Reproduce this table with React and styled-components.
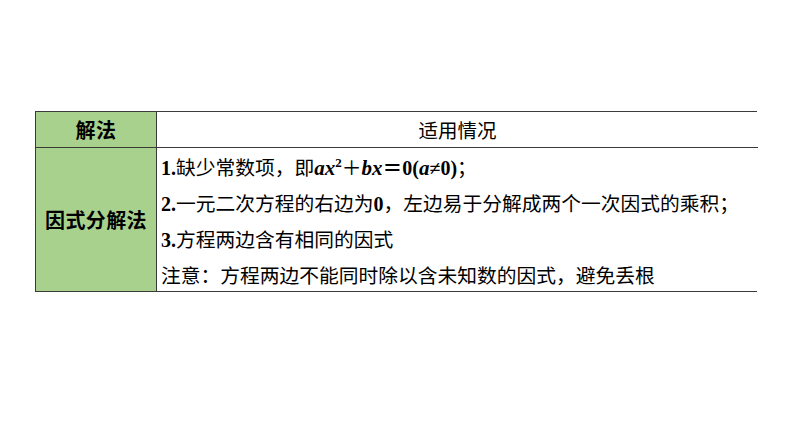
import React from "react";
import styled, { createGlobalStyle } from "styled-components";

const Global = createGlobalStyle`
  html, body { margin: 0; padding: 0; background: #fff; }
  body { font-family: "Noto Sans CJK SC", "Noto Sans", sans-serif; color: #000; }
`;

const Page = styled.div`
  width: 794px;
  height: 447px;
  box-sizing: border-box;
  padding: 111px 0 0 35px;
`;

const Table = styled.div`
  display: grid;
  grid-template-columns: 121px 601px;
  grid-template-rows: 36px 143px;
  width: 722px;
  box-sizing: border-box;
  border: 1.5px solid #3a3a3a;
`;

const Cell = styled.div`
  box-sizing: border-box;
  background: ${(p) => (p.$green ? "#a9d18e" : "#fff")};
  border-right: ${(p) => (p.$left ? "1.5px solid #3a3a3a" : "none")};
  border-bottom: ${(p) => (p.$head ? "1.5px solid #3a3a3a" : "none")};
  display: flex;
  align-items: center;
  justify-content: ${(p) => (p.$center ? "center" : "flex-start")};
`;

const LabelText = styled.span`
  font-family: "Noto Sans CJK SC", sans-serif;
  font-weight: 700;
  font-size: 20px;
  line-height: 1;
  letter-spacing: 0.4px;
`;

const HeadText = styled.span`
  font-family: "Noto Sans CJK SC", sans-serif;
  font-weight: 400;
  font-size: 19.5px;
  line-height: 1;
`;

const Lines = styled.div`
  display: flex;
  flex-direction: column;
  align-self: flex-start;
  padding: 1px 0 0 4px;
  width: 100%;
  box-sizing: border-box;
`;

const Line = styled.div`
  display: flex;
  align-items: baseline;
  height: 36px;
  line-height: 36px;
  font-family: "Noto Sans CJK SC", sans-serif;
  font-size: 19.75px;
  white-space: pre;
  & > span, & > sup { line-height: 36px; }
`;

const Txt = styled.span``;

const Num = styled.span`
  font-family: "Liberation Serif", serif;
  font-weight: 700;
  font-size: 20px;
`;

const Var = styled.span`
  font-family: "Liberation Serif", serif;
  font-weight: 700;
  font-style: italic;
  font-size: 21px;
`;

const Sup = styled.sup`
  font-family: "Liberation Serif", serif;
  font-weight: 700;
  font-size: 13px;
  position: relative;
  top: -8px;
  vertical-align: baseline;
`;

const Op = styled.span`
  font-family: "Noto Sans CJK SC", sans-serif;
  font-size: 19.75px;
  font-weight: ${(p) => (p.$bold ? 700 : 400)};
`;

export default function App() {
  return (
    <>
      <Global />
      <Page>
        <Table>
          <Cell $green $left $head $center>
            <LabelText>解法</LabelText>
          </Cell>
          <Cell $head $center>
            <HeadText>适用情况</HeadText>
          </Cell>
          <Cell $green $left $center>
            <LabelText>因式分解法</LabelText>
          </Cell>
          <Cell>
            <Lines>
              <Line>
                <Num>1.</Num>
                <Txt>缺少常数项，即</Txt>
                <Var>ax</Var>
                <Sup>2</Sup>
                <Op>＋</Op>
                <Var>bx</Var>
                <Op $bold>＝</Op>
                <Num>0(</Num>
                <Var>a</Var>
                <Num>≠0)</Num>
                <Txt>；</Txt>
              </Line>
              <Line>
                <Num>2.</Num>
                <Txt>一元二次方程的右边为</Txt>
                <Num>0</Num>
                <Txt>，左边易于分解成两个一次因式的乘积；</Txt>
              </Line>
              <Line>
                <Num>3.</Num>
                <Txt>方程两边含有相同的因式</Txt>
              </Line>
              <Line>
                <Txt>注意：方程两边不能同时除以含未知数的因式，避免丢根</Txt>
              </Line>
            </Lines>
          </Cell>
        </Table>
      </Page>
    </>
  );
}
